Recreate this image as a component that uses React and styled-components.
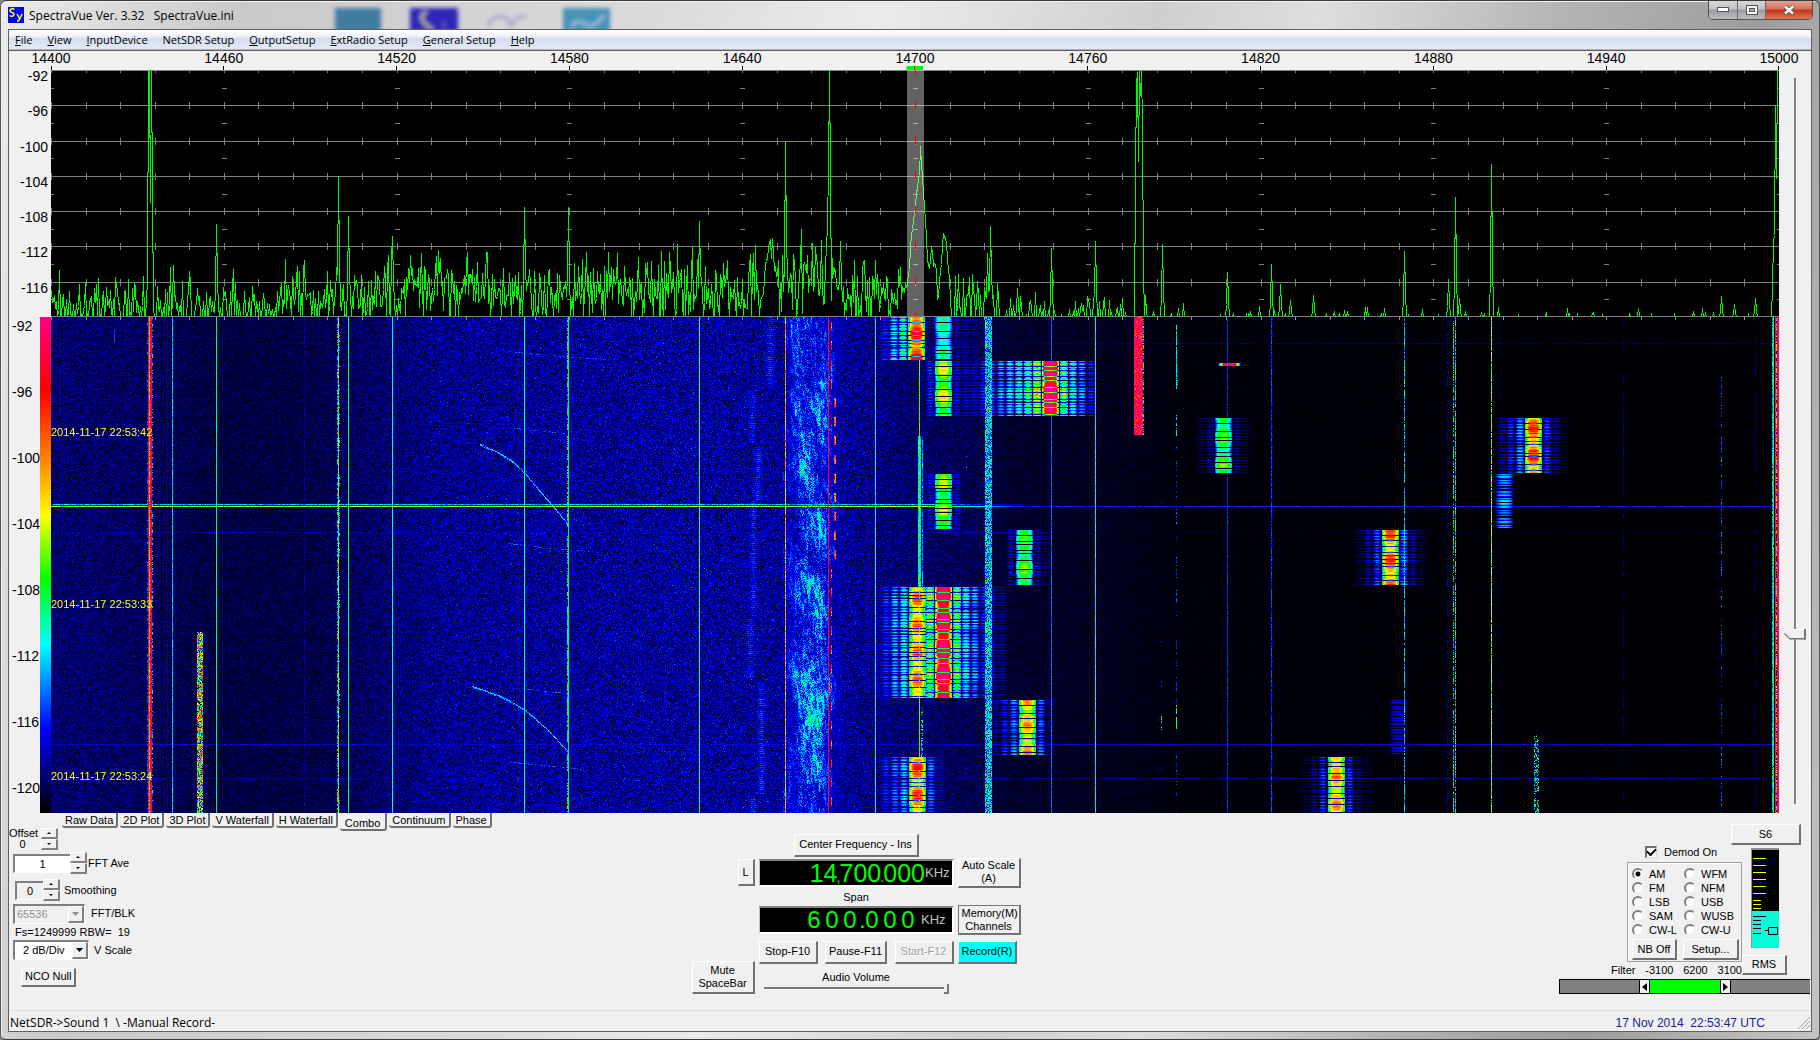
import React, { useEffect, useMemo, useRef, useState } from 'react';
import styled, { createGlobalStyle } from 'styled-components';

const GlobalStyle = createGlobalStyle`
  * {
    box-sizing: border-box;
  }
  body {
    margin: 0;
    background: #8a8a8a;
    font-family: 'Liberation Sans', Arial, sans-serif;
    font-size: 11px;
    line-height: 13px;
    color: #000;
  }
  button, input, select {
    font: inherit;
    color: inherit;
    margin: 0;
  }
`;

const PLOT_W = 1728;
const SPEC_H = 247;
const FALL_H = 496;
const FREQS = [14400, 14460, 14520, 14580, 14640, 14700, 14760, 14820, 14880, 14940, 15000];

/* ---------- signal data ---------- */

const makeRandom = (seed) => {
  let s = seed;
  return () => {
    s = (s * 1664525 + 1013904223) >>> 0;
    return s / 4294967296;
  };
};

// [x, top] inside the spectrum plot
const PEAKS = [
  [122, 195], [165, 154], [253, 190], [287, 106], [297, 146], [341, 166], [370, 183], [473, 137],
  [517, 137], [535, 182], [557, 182], [648, 151], [734, 72], [824, 190], [853, 194], [936, 183],
  [939, 156], [966, 218], [1000, 178], [1044, 171], [1111, 174], [1176, 202], [1220, 194],
  [1229, 214], [1239, 230], [1262, 225], [1353, 181], [1397, 209], [1404, 127], [1408, 228],
  [1440, 94], [1587, 239], [1670, 226], [1683, 234], [1704, 228],
];

// outlines of the wide signals, drawn over the noise
const SHAPES = [
  [[96, 210], [97, 0], [98, 0], [99, 132], [100, 0], [101, 120], [102, 240]],
  [[714, 195], [717, 182], [719, 170], [720, 188], [721, 170], [723, 195], [726, 205]],
  [[776, 150], [777, 104], [778, 0], [779, 104], [780, 230]],
  [[853, 222], [856, 210], [858, 196], [860, 164], [863, 145], [865, 119], [868, 105], [869, 76], [870, 90], [872, 125], [874, 150], [876, 185], [878, 198], [880, 176], [882, 190], [885, 200], [886, 233], [889, 205], [892, 158], [895, 178], [898, 210], [900, 247]],
  [[1083, 247], [1084, 102], [1085, 14], [1086, 2], [1087, 91], [1088, 0], [1089, 25], [1090, 0], [1091, 55], [1092, 200], [1093, 247]],
  [[1720, 247], [1721, 215], [1722, 171], [1723, 165], [1724, 36], [1725, 108], [1726, 0], [1727, 0]],
];

const noiseTop = (x, r) => {
  const g = r() + r() + r() - 1.5;
  if (x < 230) return 235 + g * 34;
  if (x < 330) return 228 + g * 34;
  if (x < 708) return 221 + g * 38;
  if (x < 747) return 214 + g * 34;
  if (x < 792) return 203 + g * 34;
  if (x < 853) return 224 + g * 38;
  if (x < 948) return 244 + g * 40;
  if (x < 1100) return 252 + g * 26;
  return 262 + g * 22;
};

const buildTrace = () => {
  const r = makeRandom(77);
  const tops = [];
  for (let x = 0; x < PLOT_W; x += 1) tops.push(Math.min(SPEC_H, noiseTop(x, r)));
  PEAKS.forEach(([x, top]) => {
    tops[x - 1] = Math.min(tops[x - 1], top + (SPEC_H - top) * 0.7);
    tops[x + 1] = Math.min(tops[x + 1], top + (SPEC_H - top) * 0.6);
    tops[x] = top;
  });
  SHAPES.forEach((pts) => {
    for (let i = 0; i < pts.length - 1; i += 1) {
      const [x0, y0] = pts[i];
      const [x1, y1] = pts[i + 1];
      for (let x = x0; x <= x1; x += 1) {
        const y = y0 + ((y1 - y0) * (x - x0)) / (x1 - x0);
        tops[x] = x1 - x0 > 1 ? y + (r() - 0.5) * 10 : y;
      }
    }
  });
  return tops.map((y, x) => `${x + 0.5},${Math.round(y) + 0.5}`).join(' ');
};

/* ---------- waterfall ---------- */

const STOPS = [
  [0, 0, 0, 0], [0.17, 0, 0, 255], [0.34, 0, 255, 255], [0.47, 0, 255, 0],
  [0.6, 255, 255, 0], [0.7, 255, 144, 0], [0.845, 255, 0, 0], [1, 255, 0, 128],
];

const colourOf = (t) => {
  const v = Math.max(0, Math.min(1, t));
  let i = 1;
  while (v > STOPS[i][0]) i += 1;
  const a = STOPS[i - 1];
  const b = STOPS[i];
  const k = (v - a[0]) / (b[0] - a[0]);
  return [1, 2, 3].map((c) => a[c] + (b[c] - a[c]) * k);
};

const floorAt = (x) => {
  const pts = [[0, 0.075], [80, 0.065], [160, 0.045], [260, 0.048], [345, 0.078], [390, 0.095], [620, 0.105], [795, 0.1], [850, 0.078], [930, 0.05], [960, 0.03], [1080, 0.018], [1130, 0.007], [1728, 0.003]];
  let i = 1;
  while (i < pts.length - 1 && x > pts[i][0]) i += 1;
  const [x0, y0] = pts[i - 1];
  const [x1, y1] = pts[i];
  return y0 + ((y1 - y0) * (x - x0)) / (x1 - x0);
};

// x, width, level, jitter, first row, last row, share of rows that show
const LINES = [
  [97, 1, 0.9, 0.25, 0, 496, 1], [98, 1, 0.55, 0.6, 0, 496, 1], [99, 2, 0.95, 0.2, 0, 496, 0.95],
  [96, 1, 0.2, 0.2, 0, 496, 0.5], [101, 1, 0.3, 0.4, 0, 496, 0.5],
  [121, 1, 0.3, 0.12, 0, 496, 1], [165, 1, 0.42, 0.06, 0, 496, 1],
  [146, 6, 0.5, 0.75, 315, 496, 0.95], [63, 1, 0.2, 0.1, 13, 25, 0.9],
  [253, 1, 0.12, 0.1, 0, 496, 0.6], [286, 1, 0.3, 0.4, 0, 496, 0.6], [287, 1, 0.55, 0.5, 0, 496, 1],
  [288, 1, 0.25, 0.4, 0, 496, 0.4], [297, 1, 0.43, 0.04, 0, 496, 1], [341, 1, 0.35, 0.1, 0, 496, 1],
  [473, 1, 0.38, 0.08, 0, 496, 1], [517, 1, 0.45, 0.08, 0, 496, 1], [516, 1, 0.34, 0.2, 0, 496, 0.6],
  [648, 1, 0.39, 0.06, 0, 496, 1], [734, 1, 0.66, 0.35, 0, 496, 1], [777, 1, 0.9, 0.12, 0, 496, 1],
  [824, 1, 0.34, 0.12, 0, 496, 1], [868, 1, 0.46, 0.16, 43, 496, 1], [867, 1, 0.33, 0.15, 119, 270, 1],
  [869, 1, 0.35, 0.2, 119, 270, 0.9], [871, 1, 0.25, 0.2, 119, 270, 0.8], [870, 2, 0.35, 0.35, 383, 440, 0.5],
  [934, 7, 0.29, 0.34, 0, 496, 0.9], [1000, 1, 0.24, 0.08, 0, 496, 1], [1044, 1, 0.32, 0.06, 0, 496, 1],
  [1083, 9, 0.95, 0.5, 0, 118, 1], [1092, 1, 0.3, 0.5, 0, 118, 0.6],
  [915, 1, 0.18, 0.2, 0, 496, 0.16], [1110, 1, 0.15, 0.2, 90, 496, 0.18], [1110, 1, 0.35, 0.3, 395, 418, 0.5],
  [1125, 1, 0.36, 0.25, 8, 72, 0.8], [1126, 1, 0.2, 0.2, 8, 72, 0.4], [1125, 1, 0.36, 0.2, 97, 122, 0.7],
  [1125, 1, 0.2, 0.15, 130, 496, 0.4], [1125, 1, 0.42, 0.2, 388, 412, 0.7],
  [1176, 1, 0.2, 0.06, 0, 496, 0.95], [1220, 1, 0.2, 0.12, 0, 496, 0.9], [1221, 1, 0.12, 0.12, 0, 496, 0.4],
  [1353, 1, 0.3, 0.24, 0, 496, 0.8], [1396, 1, 0.12, 0.1, 0, 496, 0.5], [1402, 1, 0.35, 0.35, 0, 496, 0.6],
  [1404, 1, 0.34, 0.35, 0, 496, 0.7], [1440, 1, 0.56, 0.3, 0, 496, 0.95], [1483, 5, 0.32, 0.4, 417, 496, 0.5],
  [1572, 1, 0.08, 0.06, 0, 496, 0.5], [1670, 1, 0.2, 0.2, 60, 496, 0.5], [1704, 1, 0.08, 0.06, 0, 496, 0.5],
  [1721, 1, 0.3, 0.2, 0, 496, 0.8], [1722, 1, 0.4, 0.25, 0, 496, 0.9], [1724, 1, 0.82, 0.1, 0, 496, 1],
  [1725, 1, 0.4, 0.8, 0, 496, 0.7], [1726, 2, 0.96, 0.15, 0, 496, 1],
];

// centre, first row, last row, core level, level of side lobes to the left and to the right
const BURSTS = [
  [892, 0, 43, 0.38, [], [0.14, 0.12, 0.1, 0.08]],
  [865, 0, 43, 0.8, [0.46, 0.36, 0.2], []],
  [892, 44, 99, 0.56, [0.2], [0.17, 0.15, 0.14, 0.13]],
  [999, 44, 99, 1.05, [0.66, 0.5, 0.42, 0.36, 0.3, 0.24, 0.2, 0.15], [0.55, 0.4, 0.3, 0.2]],
  [892, 157, 212, 0.52, [0.16], [0.16]],
  [973, 213, 268, 0.47, [0.15], [0.15, 0.08]],
  [866, 270, 381, 0.68, [0.4, 0.32, 0.22, 0.14, 0.1], []],
  [892, 270, 381, 1, [0.56], [0.54, 0.38, 0.3, 0.2, 0.16, 0.12]],
  [976, 383, 438, 0.64, [0.28, 0.2, 0.12], [0.26, 0.1]],
  [866, 440, 496, 0.72, [0.32, 0.26, 0.2], [0.26, 0.12]],
  [1172, 101, 156, 0.46, [0.12, 0.06], [0.12, 0.05]],
  [1482, 101, 156, 0.74, [0.3, 0.2, 0.12], [0.22, 0.12, 0.04]],
  [1453, 157, 211, 0.28, [], []],
  [1339, 213, 268, 0.72, [0.24, 0.14, 0.06], [0.28, 0.14, 0.06]],
  [1347, 383, 438, 0.14, [], []],
  [1285, 440, 496, 0.66, [0.22, 0.12, 0.05], [0.22, 0.1, 0.05]],
];

const WISPS = [
  [719, 0, 68, 10], [701, 73, 126, 8], [707, 130, 183, 10], [702, 184, 300, 8], [699, 301, 361, 9],
  [710, 365, 478, 9], [702, 481, 496, 11],
];

const CHIRPS = [
  [[429, 127], [449, 136], [463, 145], [475, 157], [489, 174], [503, 190], [517, 207]],
  [[421, 369], [450, 379], [475, 393], [495, 411], [518, 435]],
  [[457, 34], [475, 36], [520, 40], [560, 42]], [[463, 111], [514, 116]], [[457, 226], [500, 231], [538, 234]],
  [[457, 370], [514, 376]], [[453, 444], [531, 452]],
];

const buildLevels = () => {
  const r = makeRandom(2014);
  const t = new Float32Array(PLOT_W * FALL_H);
  const put = (x, y, v) => {
    if (x >= 0 && x < PLOT_W && y >= 0 && y < FALL_H) {
      const i = y * PLOT_W + x;
      if (v > t[i]) t[i] = v;
    }
  };
  const grid = new Float32Array(65536).map(() => r());
  const cell = (x, y) => grid[(x * 251 + y * 8191) & 65535];
  const smooth = (x, y) => {
    const ix = Math.floor(x);
    const iy = Math.floor(y);
    const fx = x - ix;
    const fy = y - iy;
    const a = cell(ix, iy) * (1 - fx) + cell(ix + 1, iy) * fx;
    const b = cell(ix, iy + 1) * (1 - fx) + cell(ix + 1, iy + 1) * fx;
    return a * (1 - fy) + b * fy;
  };

  for (let x = 0; x < PLOT_W; x += 1) {
    const f = floorAt(x);
    for (let y = 0; y < FALL_H; y += 1) {
      const spark = f > 0.09 && r() > 0.985 ? 0.07 : 0;
      t[y * PLOT_W + x] = f * (0.1 + 1.75 * r()) + spark;
    }
  }

  // broad over-the-air smear left of 14680
  for (let x = 732; x < 797; x += 1) {
    const edge = x < 750 ? 0.5 + (x - 732) / 36 : x > 772 ? Math.max(0.1, (799 - x) / 27) : 1;
    for (let y = 0; y < FALL_H; y += 1) {
      const n = smooth(x / 2 + 20, (y - x * 1.5) / 6) * 0.5 + smooth(x / 12 + 40, (y - x) / 26) * 0.5;
      put(x, y, edge * (0.03 + 0.42 * n * n + 0.22 * (r() - 0.3)));
    }
  }

  WISPS.forEach(([xc, y0, y1, w]) => {
    for (let y = y0; y < y1; y += 1) {
      const row = (y % 2 ? 0.08 : 0.19) + 0.06 * (r() - 0.5);
      for (let x = Math.round(xc - w / 2); x < xc + w / 2; x += 1) {
        const e = 1 - (Math.abs(x - xc) / w) * 0.8;
        put(x, y, row * e + 0.12 * (r() - 0.4));
      }
    }
  });

  BURSTS.forEach(([xc, y0, y1, core, left, right]) => {
    let nextDark = 5;
    for (let y = y0; y < y1; y += 1) {
      const k = y - y0;
      const dark = k === nextDark;
      if (dark) nextDark += 3 + Math.floor(r() * 7);
      const swell = 0.1 * Math.sin(k / 4.3 + xc) + 0.12 * (r() - 0.5);
      const drop = dark ? 0.5 : -swell * Math.min(1, core * 1.3);
      const sideDrop = k % 3 === 1 ? 0.14 : k % 3 === 2 ? 0.05 : 0;
      const lobe = (level, centre) => {
        for (let d = -4; d <= 3; d += 1) {
          const shape = 1 - ((d + 0.5) / 6) ** 2;
          const v = level * shape * (1 + swell) - sideDrop * (0.6 + level) + 0.04 * (r() - 0.5);
          put(centre + d, y, dark ? v * 0.3 : v);
        }
      };
      left.forEach((v, i) => lobe(v, xc - 13 - i * 9));
      right.forEach((v, i) => lobe(v, xc + 14 + i * 9));
      for (let d = -8; d <= 8; d += 1) {
        const shape = 1 - 0.5 * (Math.abs(d) / 8) ** 3;
        const weak = core < 0.3 && k % 3 === 1 ? 0.14 : 0;
        const v = core * shape - drop - weak + 0.03 * (r() - 0.5);
        if (dark) t[y * PLOT_W + xc + d] = Math.max(0.02, v);
        else put(xc + d, y, v);
      }
    }
  });

  LINES.forEach(([x0, w, level, jitter, y0, y1, share]) => {
    for (let y = y0; y < y1; y += 1) {
      for (let x = x0; x < x0 + w; x += 1) {
        const on = share > 0.9 ? r() < share : smooth(x0 / 3, y / 6) * 0.5 + r() * 0.5 < share;
        if (on) put(x, y, level + (r() - 0.5) * jitter);
      }
    }
  });

  // keyed carrier next to the red line
  for (let y = 5; y < FALL_H; y += 1) {
    const x = y > 75 && y < 245 ? 783 : 780;
    if ((y - 5) % 19 < 9) {
      put(x, y, 0.62 + 0.35 * r());
      if (x === 783) put(x + 1, y, 0.62 + 0.2 * r());
    }
  }

  CHIRPS.forEach((pts, n) => {
    for (let i = 0; i < pts.length - 1; i += 1) {
      const [x0, y0] = pts[i];
      const [x1, y1] = pts[i + 1];
      for (let x = x0; x < x1; x += 1) {
        const y = Math.round(y0 + ((y1 - y0) * (x - x0)) / (x1 - x0));
        if (r() < (n < 2 ? 0.95 : 0.55)) put(x, y, (n < 2 ? 0.3 : 0.22) + 0.1 * (r() - 0.5));
        if (n < 2 && r() < 0.6) put(x, y + 1, 0.28);
      }
    }
  });

  for (let x = 0; x < PLOT_W; x += 1) {
    const fade = x < 880 ? 1 : Math.max(0, 1 - (x - 880) / 130);
    put(x, 189, Math.max(0.14 + 0.08 * r(), (0.46 + 0.16 * r()) * fade));
    put(x, 187, (0.22 + 0.14 * r()) * fade);
    put(x, 427, 0.09 + 0.1 * r());
    if (r() > 0.25) put(x, 461, 0.06 + 0.1 * r());
    if (r() > 0.3) put(x, 215, x < 1000 ? 0.08 + 0.1 * r() : 0.03);
    if (r() > 0.4) put(x, 26, 0.05 + 0.05 * r());
  }

  for (let x = 1167; x < 1193; x += 1) {
    const e = 1 - Math.abs(x - 1178) / 12;
    for (let y = 46; y < 49; y += 1) put(x, y, Math.min(1, e * 1.7));
  }
  return t;
};

/* ---------- window ---------- */

const Window = styled.div`
  min-width: 1200px;
  padding: 0 8px 7px;
  border: 1px solid #3a3a3a;
  border-width: 1px 0;
  border-radius: 6px 6px 5px 5px;
  background: linear-gradient(100deg, #ececec 0, #c9c9c9 12%, #dcdcdc 34%, #ebebeb 44%, #cfcfcf 58%, #dedede 66%, #b4b4b4 78%, #9d9d9d 88%, #c4c4c4 100%);
  box-shadow: inset 1px 0 #555, inset 2px 1px #f2f2f2, inset -1px 0 #555;
`;
const TitleBar = styled.header`
  display: flex;
  align-items: flex-start;
  height: 28px;
`;
const AppName = styled.h1`
  flex: 0 0 306px;
  margin: 0;
  padding: 6px 0 0 5px;
  font: 400 12px/17px 'Open Sans', 'Noto Sans', sans-serif;
  white-space: pre;
`;
const LogoSvg = styled.svg`
  flex: none;
  width: 16px;
  height: 16px;
  margin-top: 6px;
`;
const GlassSvg = styled.svg`
  flex: none;
  width: 300px;
  height: 28px;
`;
const WindowButtons = styled.div`
  display: flex;
  height: 19px;
  margin: 0 -1px 0 auto;
  border: 1px solid #55504f;
  border-top: 0;
  border-radius: 0 0 5px 5px;
  overflow: hidden;
`;
const WindowButton = styled.button`
  display: flex;
  align-items: center;
  justify-content: center;
  width: ${(p) => (p.$close ? '47px' : '28px')};
  padding: 0;
  border: 0;
  border-left: ${(p) => (p.$first ? '0' : '1px solid #6b6665')};
  background: ${(p) =>
    p.$close
      ? 'linear-gradient(#e0a193 0, #d4705c 45%, #c03418 50%, #dc7a55 100%)'
      : 'linear-gradient(#d9d9db 0, #c0c0c4 45%, #9b9ba1 50%, #bcbcc0 100%)'};
`;
const Client = styled.main`
  border: 1px solid #5f5f5f;
  background: #f0f0f0;
`;
const MenuBar = styled.nav`
  display: flex;
  gap: 15px;
  height: 20px;
  padding: 0 6px;
  border-bottom: 1px solid #b4b4b4;
  background: linear-gradient(#fff 0, #eef1f9 35%, #d5dcee 45%, #e3e9f8 100%);
`;
const MenuItem = styled.button`
  padding: 0;
  border: 0;
  background: none;
  font: 400 11px/19px 'Open Sans', 'Noto Sans', sans-serif;
  white-space: nowrap;
`;

/* ---------- plots ---------- */

const PlotArea = styled.section`
  display: grid;
  grid-template-columns: 42px minmax(0, 1fr) 32px;
  grid-template-rows: 19px ${SPEC_H}px ${FALL_H}px;
  border-top: 1px solid #5f5f5f;
  font-size: 14px;
  line-height: 18px;
`;
const FreqScale = styled.div`
  grid-column: 2;
  display: flex;
  justify-content: space-between;
`;
const FreqTick = styled.span`
  display: flex;
  flex-direction: column;
  align-items: center;
  width: 0;
  line-height: 15px;
  &::after {
    content: '';
    width: 1px;
    height: 4px;
    background: ${(p) => (p.$center ? '#f00' : '#000')};
    box-shadow: ${(p) => (p.$center ? '-4px 0 0 4px #0f0, 4px 0 0 4px #0f0' : 'none')};
    clip-path: inset(0 -8px);
  }
`;
const DbScale = styled.div`
  grid-column: 1;
  display: flex;
  flex-direction: column;
  padding-right: 3px;
  text-align: right;
  line-height: 12px;
  span {
    flex: 1;
  }
`;
const SpectrumSvg = styled.svg`
  display: block;
  width: 100%;
  height: ${SPEC_H}px;
  background: #000;
`;
const FallScale = styled.div`
  grid-column: 1;
  display: flex;
`;
const FallLabels = styled.div`
  display: flex;
  flex: 1;
  flex-direction: column;
  justify-content: space-between;
  padding: 0 0 16px 3px;
  white-space: nowrap;
  span {
    width: 28px;
  }
`;
const ColourBar = styled.div`
  width: 11px;
  background: linear-gradient(#ff0080 0, #f00 15%, #ff9000 30%, #ff0 40%, #0f0 53%, #0ff 66%, #00f 83%, #000 100%);
`;
const Fall = styled.div`
  position: relative;
  background: #000;
  canvas {
    display: block;
    width: 100%;
    height: ${FALL_H}px;
  }
`;
const TimeMark = styled.time`
  position: absolute;
  left: 0;
  top: ${(p) => p.$row}px;
  color: #ff0;
  font-size: 11px;
  line-height: 13px;
`;
const SideSlider = styled.input`
  grid-column: 3;
  grid-row: 2 / 4;
  appearance: none;
  justify-self: center;
  width: 22px;
  height: auto;
  margin: 8px 0 9px;
  direction: ltr;
  writing-mode: vertical-lr;
  background: linear-gradient(90deg, transparent 10px, #808080 10px, #808080 12px, #fff 12px, #fff 13px, transparent 13px);
  &::-webkit-slider-thumb {
    appearance: none;
    width: 22px;
    height: 11px;
    background:
      linear-gradient(45deg, #777 0 5px, transparent 6px),
      linear-gradient(#fff 0 1px, #f0f0f0 1px 9px, #777 9px);
    box-shadow: inset -2px 0 #777;
    clip-path: polygon(0 50%, 6px 0, 100% 0, 100% 100%, 6px 100%);
  }
`;

/* ---------- control panel ---------- */

const Tabs = styled.div`
  display: flex;
  gap: 2px;
  height: 18px;
  padding-left: 53px;
`;
const Tab = styled.button`
  height: ${(p) => (p.$on ? '18px' : '15px')};
  padding: ${(p) => (p.$on ? '4px 5px 0' : '0 3px')};
  border: solid #707070;
  border-width: 0 2px 2px 0;
  border-radius: 0 0 3px 3px;
  background: #f0f0f0;
  line-height: 12px;
  white-space: nowrap;
`;
const Panel = styled.div`
  display: grid;
  grid-template-columns: 6fr auto 7fr;
  height: 180px;
  border-bottom: 1px solid #dcdcdc;
`;
const Btn = styled.button`
  min-width: ${(p) => p.$w || 0}px;
  min-height: ${(p) => p.$h || 20}px;
  padding: 0 3px;
  border: solid;
  border-width: 1px 2px 2px 1px;
  border-color: #fff #707070 #707070 #fff;
  background: ${(p) => (p.$active ? '#0ff' : '#f0f0f0')};
  line-height: 13px;
  text-align: center;
  white-space: pre-line;
  ${(p) => p.$focus && 'outline: 1px solid #777; outline-offset: -1px;'}
  &:disabled {
    color: #a0a0a0;
    text-shadow: 1px 1px #fff;
  }
`;
const Settings = styled.div`
  display: flex;
  flex-direction: column;
  align-items: flex-start;
  padding-left: 4px;
`;
const SetRow = styled.div`
  display: flex;
  align-items: center;
  gap: ${(p) => p.$gap || 0}px;
  height: ${(p) => p.$h || 26}px;
  padding-left: ${(p) => p.$in || 0}px;
  label {
    white-space: nowrap;
  }
`;
const OffsetLabel = styled.label`
  width: 32px;
  margin-left: -4px;
  padding-right: 5px;
  line-height: 11px;
  text-align: center;
`;
const Field = styled.input`
  width: ${(p) => p.$w}px;
  height: 19px;
  padding: 0;
  border: solid;
  border-width: 2px 0 1px 2px;
  border-color: #808080 #fff #fff #808080;
  background: ${(p) => (p.$grey ? '#f0f0f0' : '#fff')};
  text-align: center;
`;
const SpinBox = styled.span`
  display: flex;
  flex-direction: column;
  margin-right: ${(p) => p.$after || 0}px;
`;
const SpinButton = styled.button`
  display: flex;
  align-items: center;
  justify-content: center;
  width: 17px;
  height: 11px;
  padding: 0;
  border: solid;
  border-width: 1px 2px 2px 1px;
  border-color: #fff #808080 #808080 #fff;
  background: #f0f0f0;
`;
const SelectBox = styled.span`
  display: grid;
  width: ${(p) => p.$w}px;
  height: 20px;
  border: solid;
  border-width: 2px 1px 1px 2px;
  border-color: #808080 #fff #fff #808080;
  select {
    grid-area: 1 / 1;
    appearance: none;
    padding: 0 0 0 ${(p) => p.$in}px;
    border: 0;
    border-radius: 0;
    background: #fff;
    opacity: 1;
  }
  select:disabled {
    background: #f0f0f0;
    color: #909090;
  }
  svg {
    grid-area: 1 / 1;
    justify-self: end;
    width: 16px;
    height: 17px;
    border: solid;
    border-width: 1px 2px 2px 1px;
    border-color: #fff #808080 #808080 #fff;
    background: #f0f0f0;
    pointer-events: none;
  }
`;
const Tuner = styled.div`
  display: grid;
  grid-template-columns: 63px 195px 63px;
  column-gap: 4px;
  grid-template-rows: 24px 31px 18px 28px 36px 24px;
  align-items: center;
  align-content: start;
  padding: 2px 0 0 5px;
`;
const Screen = styled.div`
  display: flex;
  align-items: center;
  justify-content: flex-end;
  height: 28px;
  padding-right: ${(p) => p.$pad}px;
  border: solid;
  border-width: 2px 2px 2px 1px;
  border-color: #808080 #fff #fff #c0c0c0;
  background: #000;
  color: #0f0;
  font-size: ${(p) => p.$size}px;
  line-height: 24px;
`;
const Digit = styled.span`
  width: ${(p) => p.$w}px;
  text-align: center;
`;
const SmallDot = styled.span`
  width: 2px;
  padding-top: 8px;
  font-size: 14px;
  display: flex;
  justify-content: center;
`;
const Unit = styled.span`
  margin-left: ${(p) => p.$gap || 0}px;
  color: #c0c0c0;
  font-size: 13px;
`;
const Place = styled.div`
  grid-area: ${(p) => p.$at};
  display: flex;
  flex-direction: column;
  align-items: ${(p) => p.$align || 'stretch'};
  align-self: ${(p) => p.$self || 'center'};
`;
const Transport = styled.div`
  grid-area: 5 / 2;
  display: flex;
  justify-content: space-between;
`;
const Volume = styled.input`
  appearance: none;
  width: 185px;
  height: 10px;
  background: linear-gradient(transparent 3px, #777 3px, #777 5px, #fff 5px, #fff 6px, transparent 6px);
  &::-webkit-slider-thumb {
    appearance: none;
    width: 5px;
    height: 10px;
    border: solid #777;
    border-width: 0 2px 2px 0;
    background: #f0f0f0;
  }
`;
const Receiver = styled.div`
  display: flex;
  flex-direction: column;
  align-items: flex-end;
  margin-top: -7px;
`;
const SignalRow = styled.div`
  padding-right: 10px;
`;
const DemodRow = styled.div`
  display: flex;
  align-items: flex-start;
  padding-right: 24px;
`;
const DemodCol = styled.div`
  width: 131px;
`;
const Check = styled.label`
  display: flex;
  align-items: center;
  gap: 7px;
  height: 14px;
  padding-left: 34px;
  input {
    display: grid;
    place-items: center;
    appearance: none;
    width: 12px;
    height: 12px;
    border: solid;
    border-width: 2px 1px 1px 2px;
    border-color: #707070 #ddd #ddd #707070;
    background: #fff;
  }
  input:checked::after {
    content: '';
    width: 7px;
    height: 4px;
    margin-bottom: 3px;
    border: solid #000;
    border-width: 0 0 2px 2px;
    transform: rotate(-45deg);
  }
`;
const ModeBox = styled.fieldset`
  display: grid;
  grid-template-columns: 52px 57px;
  grid-auto-rows: minmax(14px, auto);
  width: 114px;
  margin: 3px 0 0 16px;
  padding: 4px 0 1px 4px;
  border: 1px solid #a0a0a0;
  box-shadow: inset 1px 1px #fff;
`;
const Mode = styled.label`
  display: flex;
  align-items: center;
  gap: 5px;
  input {
    appearance: none;
    width: 12px;
    height: 12px;
    border: 2px solid;
    border-color: #808080 #f0f0f0 #f0f0f0 #808080;
    border-radius: 50%;
    background: #fff;
  }
  input:checked {
    background: radial-gradient(circle, #000 2px, #fff 3px);
  }
`;
const ModeButtons = styled.div`
  grid-column: 1 / 3;
  display: flex;
  gap: 6px;
  height: 21px;
  margin-top: 2px;
`;
const FilterText = styled.div`
  display: flex;
  justify-content: space-between;
  margin-top: 2px;
`;
const MeterCol = styled.div`
  display: flex;
  flex-direction: column;
  align-items: center;
  gap: 7px;
  padding-top: 3px;
`;
const FilterBar = styled.div`
  display: flex;
  width: 251px;
  height: 15px;
  margin: 2px 1px 0 0;
  border: 1px solid #000;
  border-right: 0;
  background: #808080;
  button {
    display: flex;
    align-items: center;
    justify-content: center;
    width: 11px;
    padding: 0;
    border: solid #000;
    border-width: 0 1px;
    background: #f0f0f0;
  }
`;
const Band = styled.span`
  flex: ${(p) => p.$flex};
  background: ${(p) => p.$fill};
`;
const StatusBar = styled.footer`
  display: flex;
  align-items: center;
  justify-content: space-between;
  height: 20px;
  padding: 4px 1px 0;
  font: 400 12px/16px 'Open Sans', 'Noto Sans', sans-serif;
  white-space: pre;
`;
const Clock = styled.span`
  display: flex;
  align-items: center;
  gap: 33px;
  color: #1a1a9c;
  font: 400 12px/16px 'Liberation Sans', Arial, sans-serif;
`;

/* ---------- components ---------- */

const MENU = ['File', 'View', 'InputDevice', 'NetSDR Setup', 'OutputSetup', 'ExtRadio Setup', 'General Setup', 'Help'];
const TABS = ['Raw Data', '2D Plot', '3D Plot', 'V Waterfall', 'H Waterfall', 'Combo', 'Continuum', 'Phase'];
const MODES = ['AM', 'WFM', 'FM', 'NFM', 'LSB', 'USB', 'SAM', 'WUSB', 'CW-L', 'CW-U'];

const Spectrum = () => {
  const trace = useMemo(buildTrace, []);
  const rows = [1, 2, 3, 4, 5, 6].map((i) => Math.round((i * SPEC_H) / 7));
  const half = [0, 1, 2, 3, 4, 5, 6].map((i) => Math.round(((i + 0.5) * SPEC_H) / 7));
  const cols = Array.from({ length: 51 }, (_, i) => Math.round(i * 34.56));
  let ticks = '';
  cols.forEach((x) => {
    rows.forEach((y) => {
      ticks += `M${x + 0.5} ${y - 3}v7`;
    });
    ticks += `M${x + 0.5} 0v3`;
  });
  FREQS.forEach((f, i) => {
    half.forEach((y) => {
      ticks += `M${Math.round(i * 172.8) - 2} ${y + 0.5}h5`;
    });
  });
  return (
    <SpectrumSvg viewBox={`0 0 ${PLOT_W} ${SPEC_H}`} preserveAspectRatio="none" shapeRendering="crispEdges" fill="none">
      <path d={`M0 0.5H${PLOT_W}` + rows.map((y) => `M0 ${y + 0.5}H${PLOT_W}`).join('')} stroke="#808080" />
      <path d={ticks} stroke="#808080" />
      <polyline points={trace} stroke="#00f800" strokeWidth="1" />
      <rect x="856" y="0" width="17" height={SPEC_H} fill="#fff" fillOpacity="0.39" />
      <path d="M864.5 0V247" stroke="#f00" strokeDasharray="8 27" strokeDashoffset="4" />
      <path d={`M0 ${SPEC_H - 0.5}H${PLOT_W}`} stroke="#808080" />
    </SpectrumSvg>
  );
};

const Waterfall = () => {
  const ref = useRef(null);
  useEffect(() => {
    const ctx = ref.current.getContext('2d');
    const image = ctx.createImageData(PLOT_W, FALL_H);
    buildLevels().forEach((t, i) => {
      const [r, g, b] = colourOf(t);
      image.data[i * 4] = r;
      image.data[i * 4 + 1] = g;
      image.data[i * 4 + 2] = b;
      image.data[i * 4 + 3] = 255;
    });
    ctx.putImageData(image, 0, 0);
    ctx.fillStyle = '#909090';
    for (let i = 0; i <= 50; i += 1) ctx.fillRect(Math.round(i * 34.56), 0, 1, 3);
  }, []);
  return (
    <Fall>
      <canvas ref={ref} width={PLOT_W} height={FALL_H} />
      <TimeMark $row={109}>2014-11-17 22:53:42</TimeMark>
      <TimeMark $row={281}>2014-11-17 22:53:33</TimeMark>
      <TimeMark $row={453}>2014-11-17 22:53:24</TimeMark>
    </Fall>
  );
};

const Spinner = ({ name, onStep, after }) => (
  <SpinBox $after={after}>
    <SpinButton aria-label={`${name} up`} onClick={() => onStep(1)}>
      <svg width="4" height="2"><path d="M0 2L2 0L4 2Z" /></svg>
    </SpinButton>
    <SpinButton aria-label={`${name} down`} onClick={() => onStep(-1)}>
      <svg width="4" height="2"><path d="M0 0L2 2L4 0Z" /></svg>
    </SpinButton>
  </SpinBox>
);

const LeftSettings = () => {
  const [offset, setOffset] = useState(0);
  const [ave, setAve] = useState(1);
  const [smoothing, setSmoothing] = useState(0);
  return (
    <Settings>
      <SetRow $h={16}>
        <OffsetLabel>Offset<br />{offset}</OffsetLabel>
        <Spinner name="Offset" onStep={(d) => setOffset(offset + d)} />
      </SetRow>
      <SetRow $h={32}>
        <Field id="ave" $w={57} value={ave} onChange={(e) => setAve(e.target.value)} />
        <Spinner name="FFT Ave" after={1} onStep={(d) => setAve(Number(ave) + d)} />
        <label htmlFor="ave">FFT Ave</label>
      </SetRow>
      <SetRow $in={2} $h={22}>
        <Field id="smooth" $w={28} $grey value={smoothing} onChange={(e) => setSmoothing(e.target.value)} />
        <Spinner name="Smoothing" after={4} onStep={(d) => setSmoothing(Number(smoothing) + d)} />
        <label htmlFor="smooth">Smoothing</label>
      </SetRow>
      <SetRow $gap={6} $h={25}>
        <SelectBox $w={72} $in={2}>
          <select id="blk" disabled defaultValue="65536"><option>65536</option></select>
          <svg viewBox="0 0 13 14"><path d="M3 5h7l-3.5 4z" fill="#909090" /></svg>
        </SelectBox>
        <label htmlFor="blk">FFT/BLK</label>
      </SetRow>
      <SetRow $in={2} $h={12}>Fs=1249999 RBW=&nbsp; 19</SetRow>
      <SetRow $gap={5} $h={24}>
        <SelectBox $w={76} $in={8}>
          <select id="vscale" defaultValue="2 dB/Div">
            <option>1 dB/Div</option>
            <option>2 dB/Div</option>
            <option>5 dB/Div</option>
          </select>
          <svg viewBox="0 0 13 14"><path d="M3 5h7l-3.5 4z" /></svg>
        </SelectBox>
        <label htmlFor="vscale">V Scale</label>
      </SetRow>
      <SetRow $in={8} $h={30}><Btn $w={54} $h={19}>NCO Null</Btn></SetRow>
    </Settings>
  );
};

const TunerBlock = () => (
  <Tuner>
    <Place $at="1 / 2" $align="center"><Btn $w={125} $h={23}>Center Frequency - Ins</Btn></Place>
    <Place $at="2 / 1" $align="flex-end"><Btn $w={17} $h={27}>L</Btn></Place>
    <Place $at="2 / 2">
      <Screen $size={25} $pad={2}>
        <span>14</span><SmallDot>,</SmallDot><span>700</span><SmallDot>.</SmallDot><span>000</span>
        <Unit>KHz</Unit>
      </Screen>
    </Place>
    <Place $at="2 / 3"><Btn $h={30}>{'Auto Scale\n(A)'}</Btn></Place>
    <Place $at="3 / 2" $align="center">Span</Place>
    <Place $at="4 / 2">
      <Screen $size={24} $pad={6}>
        {'600.000'.split('').map((c, i) => (
          <Digit key={i} $w={c === '.' ? 4 : 18}>{c}</Digit>
        ))}
        <Unit $gap={4}>KHz</Unit>
      </Screen>
    </Place>
    <Place $at="4 / 3"><Btn $h={30} $focus>{'Memory(M)\nChannels'}</Btn></Place>
    <Transport>
      <Btn $w={59} $h={23}>Stop-F10</Btn>
      <Btn $w={59} $h={23}>Pause-F11</Btn>
      <Btn $w={59} $h={23} disabled>Start-F12</Btn>
    </Transport>
    <Place $at="5 / 3" $align="flex-start"><Btn $w={59} $h={23} $active>Record(R)</Btn></Place>
    <Place $at="5 / 1 / 7" $self="end" $align="flex-start"><Btn $w={63} $h={33}>{'Mute\nSpaceBar'}</Btn></Place>
    <Place $at="6 / 2" $align="center">
      <label htmlFor="volume">Audio Volume</label>
      <Volume id="volume" type="range" defaultValue="100" />
    </Place>
  </Tuner>
);

const Meter = () => (
  <svg width="28" height="100" shapeRendering="crispEdges" role="img" aria-label="Signal strength">
    <rect width="28" height="100" fill="#909090" />
    <rect x="1" y="2" width="27" height="98" />
    <rect x="1" y="63" width="27" height="37" fill="#00ffd8" />
    <path d="M2 10.5h13M2 17.5h13M2 24.5h13M2 31.5h13M2 38.5h13M2 45.5h13M2 52.5h8M2 56.5h8M2 60.5h8" stroke="#ff0" />
    <path d="M2 68.5h13M2 72.5h8M2 76.5h8M2 80.5h8M2 85.5h8M14 82.5h3M17.5 79.5h9v7h-9z" stroke="#000" fill="none" />
  </svg>
);

const ReceiverBlock = () => (
  <Receiver>
    <SignalRow><Btn $w={70} $h={21}>S6</Btn></SignalRow>
    <DemodRow>
      <DemodCol>
        <Check><input type="checkbox" defaultChecked />Demod On</Check>
        <ModeBox aria-label="Demodulator">
          {MODES.map((m) => (
            <Mode key={m}><input type="radio" name="mode" defaultChecked={m === 'AM'} />{m}</Mode>
          ))}
          <ModeButtons><Btn $w={45}>NB Off</Btn><Btn $w={56}>Setup...</Btn></ModeButtons>
        </ModeBox>
        <FilterText><span>Filter</span><span>-3100</span><span>6200</span><span>3100</span></FilterText>
      </DemodCol>
      <MeterCol><Meter /><Btn $w={45}>RMS</Btn></MeterCol>
    </DemodRow>
    <FilterBar>
      <Band $flex="80" $fill="#808080" />
      <button aria-label="Filter low edge"><svg width="5" height="8"><path d="M5 0L0 4L5 8Z" /></svg></button>
      <Band $flex="70" $fill="#0f0" />
      <button aria-label="Filter high edge"><svg width="5" height="8"><path d="M0 0L5 4L0 8Z" /></svg></button>
      <Band $flex="80" $fill="#808080" />
    </FilterBar>
  </Receiver>
);

const App = () => {
  const [tab, setTab] = useState('Combo');
  return (
    <>
      <GlobalStyle />
      <Window>
        <TitleBar>
          <LogoSvg viewBox="0 0 16 16">
            <rect width="16" height="16" fill="#0008f0" />
            <path d="M6.500 2.500Q4 .8 2.500 2.500T4 5.500T5.500 8.500T1.500 8.500M9 7l2.500 4.500M14 7l-2.500 5.500q-.8 2-2.500 1.500" fill="none" stroke="#ff0" strokeWidth="1.500" />
          </LogoSvg>
          <AppName>SpectraVue Ver. 3.32   SpectraVue.ini</AppName>
          <GlassSvg viewBox="0 0 300 28">
            <defs><filter id="glass"><feGaussianBlur stdDeviation="2" /></filter></defs>
            <g filter="url(#glass)" fill="none">
              <rect x="5" y="7" width="46" height="24" fill="#3f7ca0" />
              <rect x="80" y="7" width="48" height="24" fill="#2f27b8" />
              <path d="M97 11q-8 3-4 9t10 8" stroke="#a9a88c" strokeWidth="4" />
              <path d="M114 20v8" stroke="#5a55b0" strokeWidth="3" />
              <path d="M158 26q4-12 14-10t8 10q8-14 16-10" stroke="#a9a3cc" strokeWidth="3" />
              <rect x="233" y="7" width="47" height="24" fill="#4691b8" />
              <path d="M241 26q6-9 14-3t19-9" stroke="#9cc4d6" strokeWidth="3" />
            </g>
          </GlassSvg>
          <WindowButtons>
            <WindowButton $first aria-label="Minimize">
              <svg width="12" height="6"><rect x=".5" y=".5" width="11" height="4" fill="#fff" stroke="#555" /></svg>
            </WindowButton>
            <WindowButton aria-label="Maximize">
              <svg width="12" height="10">
                <rect x=".5" y=".5" width="11" height="9" fill="#fff" stroke="#555" />
                <rect x="3.500" y="3.500" width="5" height="3" fill="#aaa" stroke="#555" />
              </svg>
            </WindowButton>
            <WindowButton $close aria-label="Close">
              <svg width="12" height="10" fill="none">
                <path d="M2 1.500L10 8.500M10 1.500L2 8.500" stroke="#544" strokeWidth="4" />
                <path d="M2 1.500L10 8.500M10 1.500L2 8.500" stroke="#fff" strokeWidth="2.500" />
              </svg>
            </WindowButton>
          </WindowButtons>
        </TitleBar>
        <Client>
          <MenuBar>
            {MENU.map((m) => (
              <MenuItem key={m}>{m === 'NetSDR Setup' ? m : <><u>{m[0]}</u>{m.slice(1)}</>}</MenuItem>
            ))}
          </MenuBar>
          <PlotArea>
            <FreqScale>
              {FREQS.map((f) => <FreqTick key={f} $center={f === 14700}>{f}</FreqTick>)}
            </FreqScale>
            <DbScale>
              {[-92, -96, -100, -104, -108, -112, -116].map((d) => <span key={d}>{d}</span>)}
            </DbScale>
            <Spectrum />
            <SideSlider type="range" min="0" max="100" defaultValue="77" aria-label="Level" />
            <FallScale>
              <FallLabels>
                {[-92, -96, -100, -104, -108, -112, -116, -120].map((d) => <span key={d}>{d}</span>)}
              </FallLabels>
              <ColourBar />
            </FallScale>
            <Waterfall />
          </PlotArea>
          <Tabs role="tablist">
            {TABS.map((t) => (
              <Tab key={t} role="tab" aria-selected={t === tab} $on={t === tab} onClick={() => setTab(t)}>{t}</Tab>
            ))}
          </Tabs>
          <Panel>
            <LeftSettings />
            <TunerBlock />
            <ReceiverBlock />
          </Panel>
          <StatusBar>
            <span>{'NetSDR->Sound 1  \\ -Manual Record-'}</span>
            <Clock>
              {'17 Nov 2014  22:53:47 UTC'}
              <svg width="12" height="12" stroke="#a0a0a0"><path d="M0 12L12 0M4 12L12 4M8 12L12 8" /></svg>
            </Clock>
          </StatusBar>
        </Client>
      </Window>
    </>
  );
};

export default App;
